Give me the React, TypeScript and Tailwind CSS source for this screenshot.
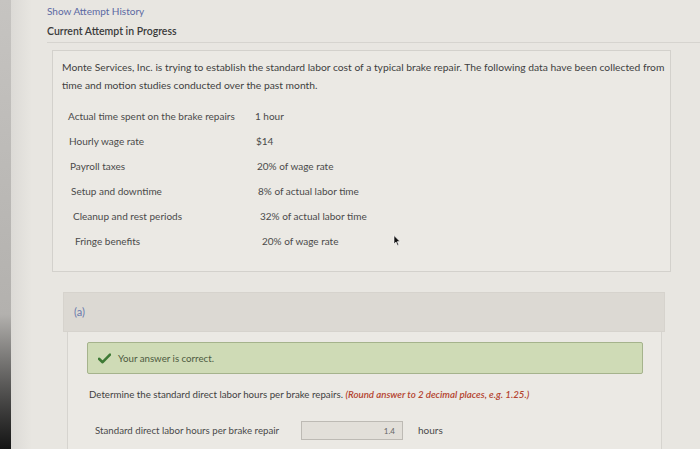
import React from "react";

const rows: { label: string; value: string; pad: string }[] = [
  { label: "Actual time spent on the brake repairs", value: "1 hour", pad: "pl-[0px]" },
  { label: "Hourly wage rate", value: "$14", pad: "pl-[1px]" },
  { label: "Payroll taxes", value: "20% of wage rate", pad: "pl-[2px]" },
  { label: "Setup and downtime", value: "8% of actual labor time", pad: "pl-[3px]" },
  { label: "Cleanup and rest periods", value: "32% of actual labor time", pad: "pl-[5px]" },
  { label: "Fringe benefits", value: "20% of wage rate", pad: "pl-[7px]" },
];

export default function App() {
  return (
    <div
      className="w-[700px] h-[449px] flex overflow-hidden bg-[#e8e6e1] text-[#444]"
      style={{ fontFamily: "Lato, 'Open Sans', 'Liberation Sans', sans-serif" }}
    >
      <div className="w-[11px] h-full shrink-0 bg-gradient-to-b from-[#c6c4c1] via-[#b3b1ae] via-70% to-[#151515]" />
      <div className="w-[21px] h-full shrink-0 bg-gradient-to-r from-[#dcdad6] to-[#e8e6e1]" />
      <div className="flex-1 flex flex-col pl-[15px]">
        <div className="pt-[4px] text-[10px] leading-[14px] text-[#5b69a3]">Show Attempt History</div>
        <div className="mt-[6px] text-[10.5px] leading-[14px] font-semibold text-[#3a3a3a]">
          Current Attempt in Progress
        </div>
        <div className="mt-[4px] border-t border-[#d6d4cf]" />

        <div className="relative mt-[7px] ml-[5px] w-[619px] h-[222px] border border-[#d3d1cc] bg-[#ebe9e4] pl-[9px] pr-[4px] pt-[7px]">
          <p className="text-[10.3px] leading-[18px] text-[#3f3f3f]">
            Monte Services, Inc. is trying to establish the standard labor cost of a typical brake repair. The following
            data have been collected from time and motion studies conducted over the past month.
          </p>
          <div className="mt-[10px] ml-[6px] flex flex-col">
            {rows.map((r) => (
              <div key={r.label} className={`flex items-center h-[25px] text-[10px] text-[#4a4a4a] ${r.pad}`}>
                <div className="w-[187px]">{r.label}</div>
                <div>{r.value}</div>
              </div>
            ))}
          </div>
          <svg className="absolute left-[340px] top-[184px]" width="8" height="11" viewBox="0 0 8 11">
            <path d="M1 0.5 L1 9 L3 7 L4.5 10.5 L5.8 10 L4.3 6.6 L7 6.6 Z" fill="#111" stroke="#fff" strokeWidth="0.6" />
          </svg>
        </div>

        <div className="mt-[20px] ml-[16px] w-[602px] h-[40px] bg-[#dcd9d3] border border-[#d6d3cd] flex items-center pl-[10px]">
          <span className="text-[11px] text-[#6a79ad]">(a)</span>
        </div>

        <div className="ml-[20px] w-[595px] flex-1 bg-[#ebe9e4] border-x border-[#d6d4cf] flex flex-col">
          <div className="mt-[10px] ml-[19px] w-[556px] h-[32px] rounded-[2px] border border-[#a5b38c] bg-[#cfdbb6] flex items-center pl-[10px]">
            <svg width="13" height="11" viewBox="0 0 13 11">
              <path d="M1 5.8 L4.6 9.2 L12 1.6" fill="none" stroke="#3e7a35" strokeWidth="2.6" strokeLinecap="round" strokeLinejoin="round" />
            </svg>
            <span className="ml-[7px] text-[9.7px] text-[#4d5a3f]">Your answer is correct.</span>
          </div>

          <div className="mt-[13px] ml-[21px] text-[9.7px] leading-[14px] text-[#3f3f3f]">
            Determine the standard direct labor hours per brake repairs.{" "}
            <span className="font-semibold italic text-[#b4432f]">(Round answer to 2 decimal places, e.g. 1.25.)</span>
          </div>

          <div className="mt-[20px] ml-[27px] flex items-center">
            <div className="w-[206px] text-[9.7px] text-[#4a4a4a]">Standard direct labor hours per brake repair</div>
            <div className="w-[102px] h-[19px] border border-[#bdbab4] bg-[#e2dfd9] flex items-center justify-end pr-[7px] text-[8px] text-[#666]">
              1.4
            </div>
            <div className="ml-[15px] text-[10px] text-[#4a4a4a]">hours</div>
          </div>
        </div>
      </div>
    </div>
  );
}
